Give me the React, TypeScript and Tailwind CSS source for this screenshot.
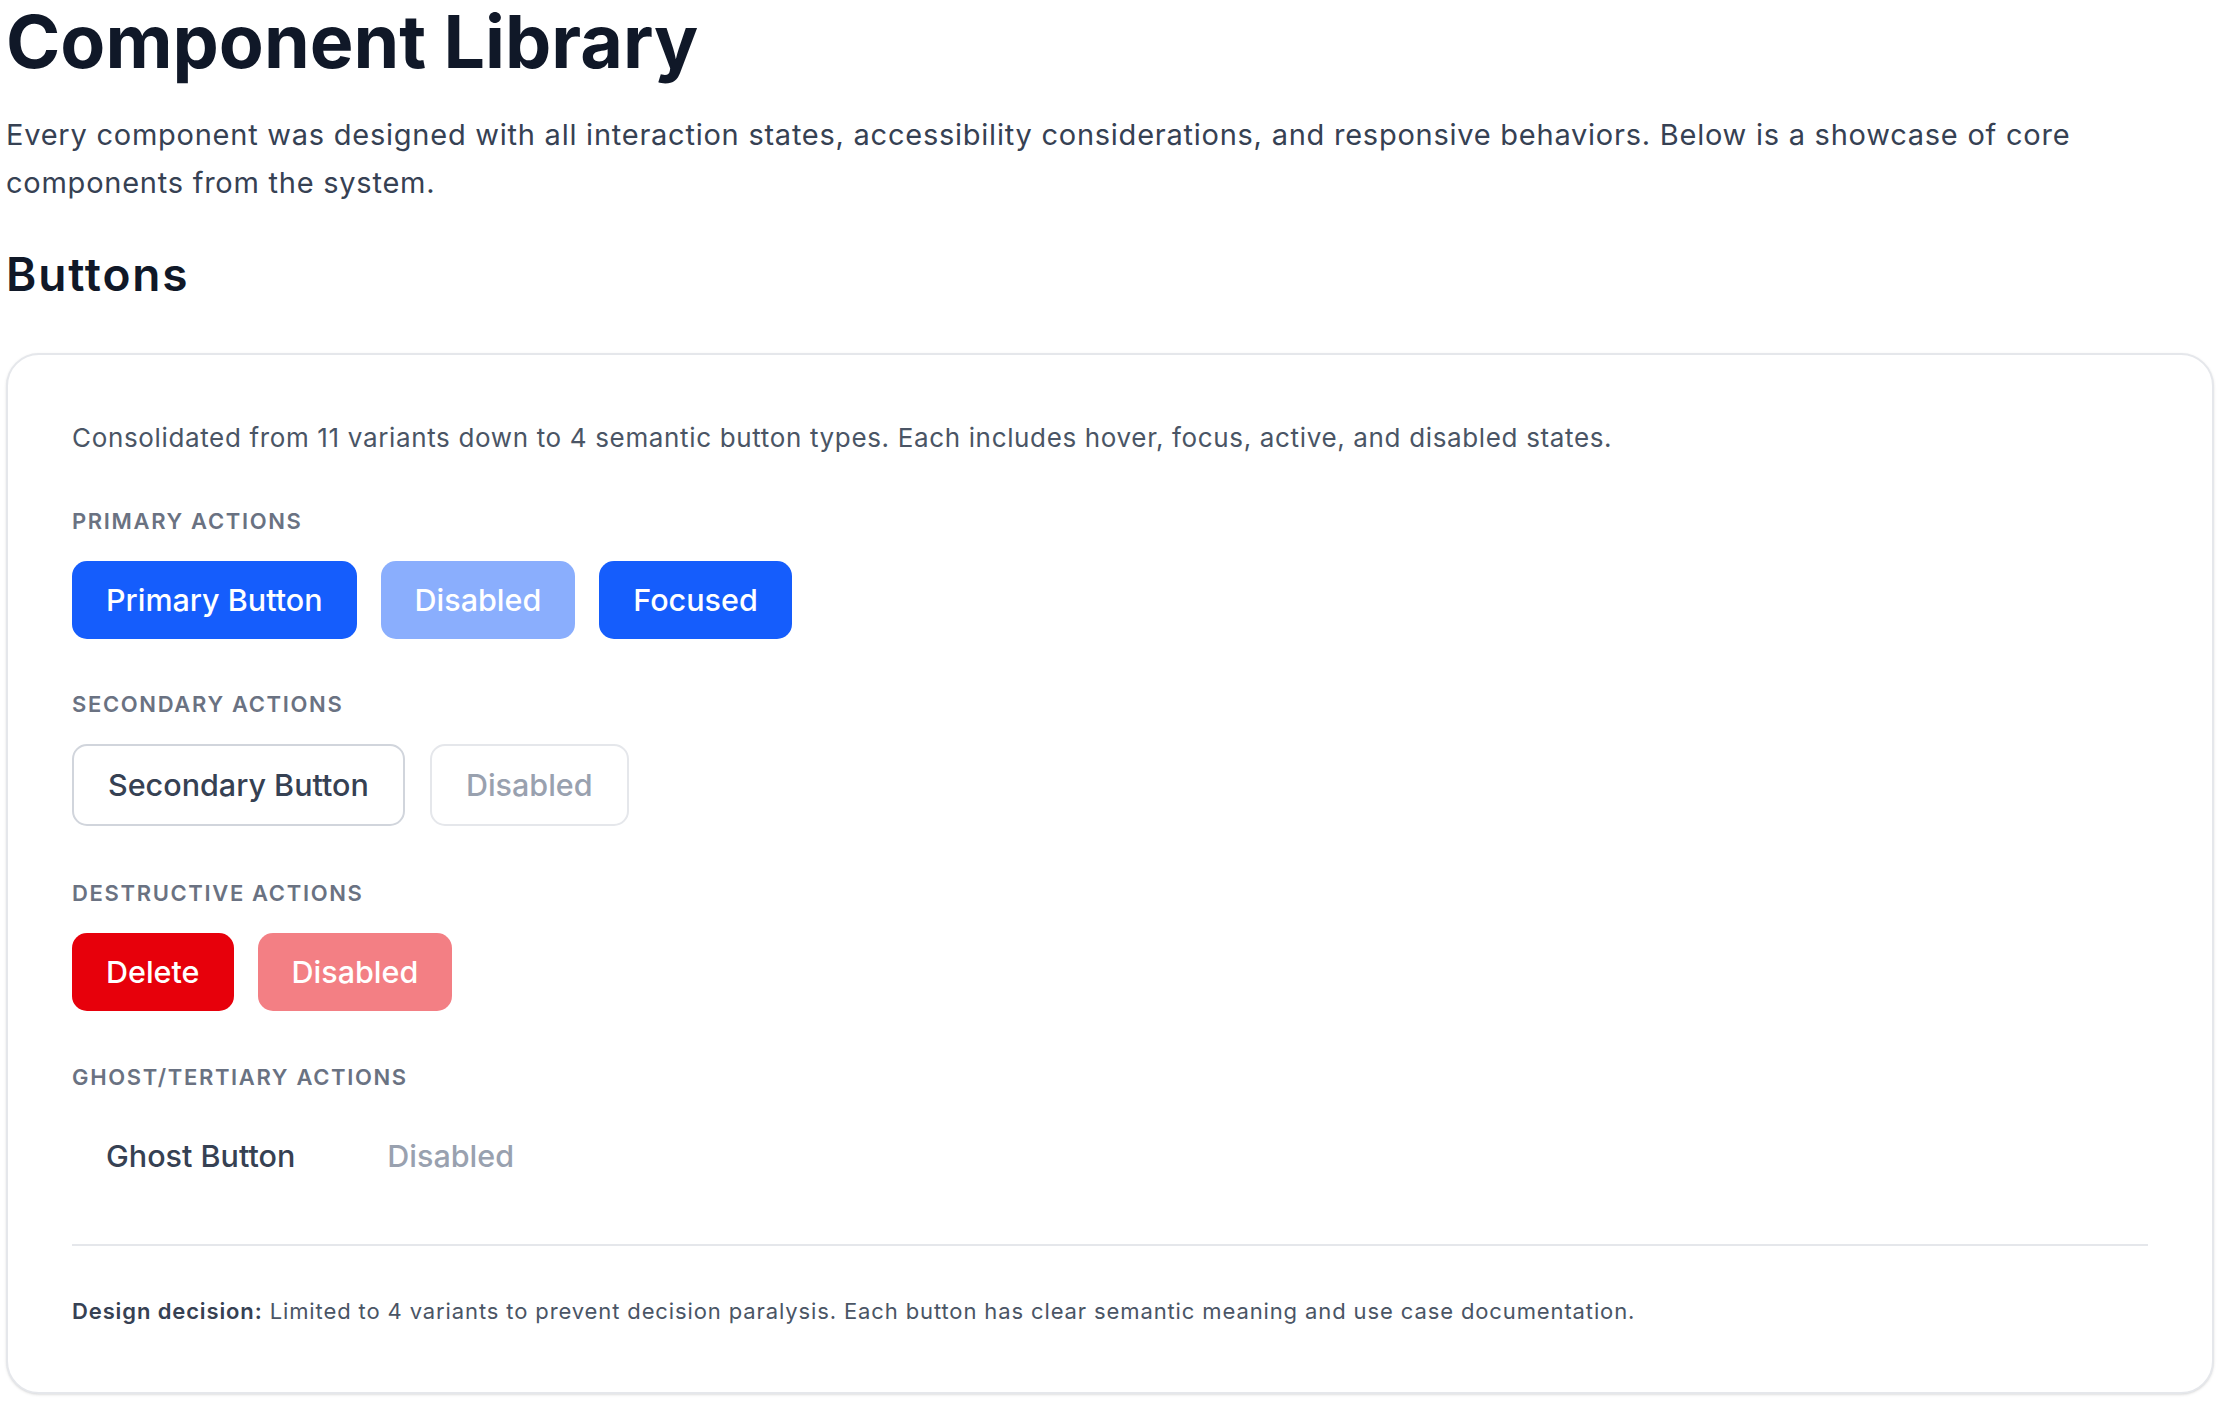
const primary = [
  { label: 'Primary Button', cls: 'bg-blue-600 text-white' },
  { label: 'Disabled', cls: 'bg-blue-600/50 text-white' },
  { label: 'Focused', cls: 'bg-blue-600 text-white' },
];

function Label({ children }: { children: string }) {
  return (
    <div className="mb-[25px] text-[22px] leading-[30px] font-semibold uppercase tracking-[0.075em] text-gray-500">
      {children}
    </div>
  );
}

const btn = 'h-[78px] px-[34px] rounded-[15px] text-[30.5px] font-medium leading-none flex items-center';

export default function App() {
  return (
    <div className="p-[6px] bg-white min-h-screen" style={{ fontFamily: 'Inter, "Noto Sans", sans-serif' }}>
      <h1 className="text-[73.5px] leading-[72px] font-bold text-gray-900">Component Library</h1>
      <p className="mt-[33px] text-[29px] leading-[48px] tracking-[0.026em] text-gray-700">
        Every component was designed with all interaction states, accessibility considerations, and responsive behaviors. Below is a showcase of core components from the system.
      </p>
      <h2 className="mt-[40px] text-[46px] leading-[54px] font-semibold tracking-[0.04em] text-gray-900">Buttons</h2>

      <div className="mt-[52px] rounded-[33px] border-2 border-gray-200 bg-white p-[64px] shadow-sm">
        <p className="mt-[1px] text-[26px] leading-[36px] tracking-[0.025em] text-gray-600">
          Consolidated from 11 variants down to 4 semantic button types. Each includes hover, focus, active, and disabled states.
        </p>

        <div className="mt-[50px]">
          <Label>Primary Actions</Label>
          <div className="flex gap-[24px]">
            {primary.map((b) => (
              <button key={b.label} className={`${btn} ${b.cls}`}>
                {b.label}
              </button>
            ))}
          </div>
        </div>

        <div className="mt-[50px]">
          <Label>Secondary Actions</Label>
          <div className="flex gap-[25px]">
            <button className={`${btn} h-[82px] border-2 border-gray-300 bg-white text-gray-700`}>Secondary Button</button>
            <button className={`${btn} h-[82px] border-2 border-gray-200 bg-white text-gray-400`}>Disabled</button>
          </div>
        </div>

        <div className="mt-[52px]">
          <Label>Destructive Actions</Label>
          <div className="flex gap-[24px]">
            <button className={`${btn} bg-red-600 text-white`}>Delete</button>
            <button className={`${btn} bg-red-600/50 text-white`}>Disabled</button>
          </div>
        </div>

        <div className="mt-[51px]">
          <Label>Ghost/Tertiary Actions</Label>
          <div className="flex gap-[24px]">
            <button className={`${btn} text-gray-700`}>Ghost Button</button>
            <button className={`${btn} text-gray-400`}>Disabled</button>
          </div>
        </div>

        <div className="mt-[49px] border-t-2 border-gray-200" />

        <p className="mt-[50px] mb-[2px] text-[22px] leading-[30px] tracking-[0.04em] text-gray-600">
          <span className="font-semibold text-gray-700">Design decision:</span> Limited to 4 variants to prevent decision paralysis. Each button has clear semantic meaning and use case documentation.
        </p>
      </div>
    </div>
  );
}
